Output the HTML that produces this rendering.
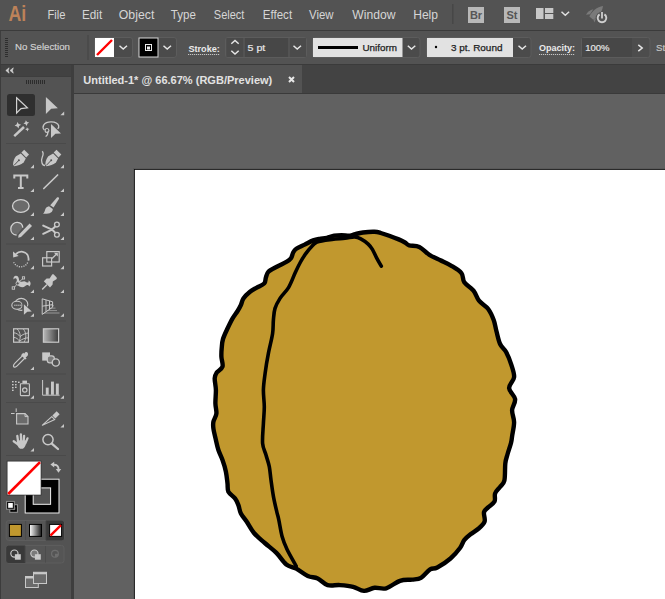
<!DOCTYPE html>
<html><head><meta charset="utf-8"><title>Illustrator</title>
<style>
html,body{margin:0;padding:0;width:665px;height:599px;overflow:hidden;background:#535353;font-family:"Liberation Sans", sans-serif;}
.a{position:absolute;}
svg text{font-family:"Liberation Sans", sans-serif;}
</style></head><body>
<!-- menu bar -->
<div class="a" style="left:0;top:0;width:665px;height:30px;background:#535353"></div>
<div class="a" style="left:0;top:30px;width:665px;height:1px;background:#3b3b3b"></div>
<!-- control bar -->
<div class="a" style="left:0;top:31px;width:665px;height:33px;background:#535353;border-left:1px solid #3e3e3e"></div>
<div class="a" style="left:0;top:64px;width:665px;height:1px;background:#3b3b3b"></div>
<!-- tools panel -->
<div class="a" style="left:0;top:65px;width:71px;height:534px;background:#535353"></div>
<div class="a" style="left:0;top:65px;width:71px;height:11px;background:#424242"></div>
<div class="a" style="left:0;top:76px;width:71px;height:1px;background:#3e3e3e"></div>
<div class="a" style="left:0;top:65px;width:1px;height:534px;background:#3c3c3c"></div>
<div class="a" style="left:71px;top:65px;width:3px;height:534px;background:#3e3e3e"></div>
<!-- tab bar -->
<div class="a" style="left:74px;top:65px;width:591px;height:28px;background:#434343"></div>
<div class="a" style="left:74px;top:65px;width:228px;height:28px;background:#535353"></div>
<div class="a" style="left:74px;top:93px;width:591px;height:1px;background:#3a3a3a"></div>
<!-- canvas -->
<div class="a" style="left:74px;top:94px;width:591px;height:505px;background:#616161"></div>
<div class="a" style="left:133px;top:168px;width:532px;height:431px;background:#595959"></div>
<div class="a" style="left:134px;top:169px;width:531px;height:430px;background:#2a2a2a"></div>
<div class="a" style="left:134px;top:169px;width:1px;height:1px;background:#111"></div>
<div class="a" style="left:135px;top:170px;width:530px;height:429px;background:#ffffff"></div>

<svg class="a" style="left:0;top:0" width="665" height="599" viewBox="0 0 665 599">
  <!-- walnut -->
  <path d="M362.9 232.5C366.1 232.1 371.5 231.7 374.5 231.8C377.5 231.9 378.4 232.3 380.8 233.0C383.2 233.7 386.2 234.6 389.2 235.7C392.2 236.8 396.1 238.3 398.7 239.4C401.3 240.5 403.2 241.5 405.0 242.5C406.8 243.5 406.8 244.7 409.2 245.4C411.6 246.1 415.9 245.3 419.3 246.9C422.7 248.5 425.9 252.6 429.4 254.8C432.9 257.0 436.7 258.5 440.4 260.3C444.1 262.1 447.9 263.7 451.4 265.8C454.9 267.9 459.4 270.4 461.5 273.2C463.6 275.9 462.3 279.4 464.3 282.3C466.3 285.2 471.1 287.5 473.5 290.6C475.9 293.7 476.6 297.6 479.0 300.7C481.4 303.8 485.8 305.8 488.2 309.0C490.6 312.2 492.3 316.3 493.7 320.0C495.1 323.7 495.3 327.0 496.4 331.0C497.5 335.0 498.5 340.5 500.1 344.0C501.7 347.5 504.3 348.6 506.1 352.0C507.9 355.4 509.8 359.9 511.1 364.1C512.4 368.3 514.4 373.1 514.1 377.1C513.8 381.1 508.9 384.4 509.1 388.1C509.3 391.8 514.6 395.4 515.1 399.1C515.6 402.8 512.3 406.4 512.1 410.2C511.9 414.0 514.1 417.9 514.1 422.2C514.1 426.5 512.6 432.7 512.1 436.2C511.6 439.7 511.8 440.0 511.0 443.0C510.2 446.0 508.6 450.6 507.6 454.0C506.7 457.4 505.8 459.0 505.3 463.4C504.8 467.8 505.3 476.6 504.4 480.5C503.5 484.4 501.6 484.9 500.0 487.0C498.4 489.1 496.0 491.0 495.1 493.4C494.2 495.8 495.7 499.3 494.5 501.6C493.3 503.9 489.9 505.6 488.1 507.4C486.4 509.1 484.6 509.8 484.0 512.1C483.4 514.5 485.5 518.8 484.6 521.5C483.7 524.2 481.1 526.4 478.7 528.5C476.3 530.6 472.9 532.4 470.5 534.3C468.1 536.2 466.1 537.7 464.4 539.9C462.7 542.1 462.5 544.6 460.2 547.7C457.9 550.8 454.3 555.2 450.5 558.5C446.7 561.8 440.7 565.7 437.3 567.5C433.9 569.3 432.8 567.6 430.1 569.3C427.4 571.0 424.0 576.1 421.0 577.8C418.0 579.5 415.5 579.1 412.0 579.6C408.5 580.1 404.3 579.3 400.0 580.8C395.7 582.2 390.4 587.1 386.2 588.3C382.0 589.5 378.3 587.4 374.6 587.8C370.9 588.2 367.5 591.1 363.9 590.9C360.3 590.7 357.1 587.8 353.1 586.8C349.1 585.8 344.1 585.4 339.9 585.1C335.6 584.8 331.3 586.2 327.6 585.1C323.9 584.0 321.0 580.0 317.7 578.5C314.4 577.0 311.4 577.6 307.8 576.0C304.2 574.4 299.8 570.5 296.2 568.6C292.6 566.7 289.6 567.1 286.3 564.5C283.0 561.9 280.0 556.5 276.4 552.9C272.8 549.3 268.5 546.3 264.8 543.0C261.1 539.7 257.0 536.6 254.0 533.0C251.0 529.4 248.8 524.8 246.6 521.5C244.4 518.2 242.3 516.2 240.9 513.5C239.5 510.8 239.4 507.6 238.4 505.1C237.4 502.6 236.7 500.6 235.0 498.4C233.3 496.2 229.7 494.3 228.4 491.8C227.2 489.3 227.9 486.8 227.5 483.4C227.1 480.0 226.7 475.6 225.9 471.7C225.1 467.8 223.8 463.6 222.5 460.0C221.2 456.4 219.5 453.3 218.4 450.0C217.3 446.7 216.7 443.6 215.9 440.0C215.1 436.4 213.8 431.5 213.4 428.5C213.0 425.5 212.9 424.3 213.4 421.8C213.9 419.3 216.1 416.6 216.4 413.5C216.7 410.4 215.5 407.3 215.4 403.4C215.3 399.5 216.0 394.2 215.9 390.0C215.8 385.8 214.6 381.3 214.7 378.4C214.8 375.5 215.4 374.6 216.7 372.6C218.0 370.7 221.7 369.4 222.5 366.7C223.3 364.0 221.5 359.8 221.4 356.7C221.3 353.6 221.4 351.2 221.7 348.3C222.0 345.4 222.0 342.3 223.0 339.0C224.0 335.7 225.9 331.9 227.5 328.5C229.1 325.1 230.9 321.3 232.6 318.4C234.3 315.5 236.2 313.2 237.6 311.0C239.0 308.8 239.9 307.1 240.9 305.0C241.9 302.9 241.9 300.6 243.4 298.4C244.9 296.2 247.8 293.5 250.0 291.7C252.2 289.9 254.4 289.0 256.8 287.6C259.2 286.2 262.8 285.1 264.3 283.4C265.8 281.7 265.2 279.4 265.9 277.5C266.6 275.6 266.6 273.5 268.4 271.7C270.2 269.9 273.7 268.4 276.8 266.7C279.9 265.0 284.4 263.1 286.8 261.7C289.2 260.3 289.9 259.8 291.0 258.3C292.1 256.8 292.3 254.1 293.2 252.5C294.1 250.9 294.4 250.1 296.3 248.8C298.2 247.5 301.9 246.0 304.7 244.6C307.5 243.2 310.7 241.4 313.2 240.4C315.7 239.4 317.2 239.2 319.5 238.8C321.8 238.4 324.4 238.3 326.8 237.8C329.2 237.3 331.7 236.1 334.2 235.7C336.7 235.3 339.0 235.2 341.6 235.2C344.2 235.2 347.7 235.9 350.0 235.7C352.3 235.5 353.2 234.6 355.3 234.1C357.4 233.6 359.7 232.9 362.9 232.5Z" fill="#c1982e" stroke="#000" stroke-width="4.4" stroke-linejoin="round"/>
  <path d="M381.3 266.2C380.5 264.8 378.1 260.6 376.6 257.8C375.1 255.0 373.8 251.7 372.4 249.4C371.0 247.1 370.1 245.9 368.2 244.1C366.3 242.3 363.1 240.0 360.8 238.8C358.5 237.6 357.1 237.1 354.5 237.0C351.9 236.9 348.8 237.9 345.0 238.3C341.2 238.7 336.7 238.8 332.0 239.4C327.3 240.0 320.5 240.7 317.0 242.0C313.5 243.3 312.9 245.4 311.0 247.3C309.1 249.2 307.6 251.2 305.8 253.6C304.1 256.1 302.2 258.9 300.5 262.0C298.8 265.1 297.3 268.2 295.3 272.5C293.3 276.8 291.1 283.3 288.5 287.6C285.9 291.9 282.2 294.9 280.0 298.4C277.8 301.9 276.1 304.8 275.0 308.4C273.9 312.0 273.8 315.8 273.4 320.0C273.0 324.2 273.4 327.9 272.6 333.5C271.8 339.1 269.6 346.8 268.4 353.4C267.1 360.0 265.9 367.3 265.1 373.4C264.3 379.5 263.5 384.4 263.4 390.0C263.3 395.6 264.3 401.2 264.3 406.8C264.3 412.4 263.7 417.4 263.4 423.5C263.1 429.6 262.2 438.1 262.6 443.4C263.0 448.6 264.9 451.1 266.0 455.0C267.1 458.9 268.5 462.5 269.3 466.7C270.1 470.9 270.3 475.0 271.0 480.0C271.7 485.0 272.5 491.5 273.5 496.8C274.5 502.1 275.9 508.0 276.8 511.8C277.7 515.6 277.9 515.7 278.8 519.8C279.7 523.9 280.7 531.4 282.1 536.4C283.5 541.4 284.8 544.6 287.1 549.6C289.5 554.6 294.7 563.4 296.2 566.1" fill="none" stroke="#000" stroke-width="3.6" stroke-linecap="round" stroke-linejoin="round"/>
  <!-- menu -->
  <text x="8.4" y="20.9" font-size="22" fill="#bd8259" font-weight="bold" textLength="17.8" lengthAdjust="spacingAndGlyphs">Ai</text>
  <text x="47.5" y="19" font-size="12" fill="#d6d6d6" font-weight="normal" text-anchor="start" textLength="18.1" lengthAdjust="spacingAndGlyphs">File</text><text x="82" y="19" font-size="12" fill="#d6d6d6" font-weight="normal" text-anchor="start" textLength="20.2" lengthAdjust="spacingAndGlyphs">Edit</text><text x="118.8" y="19" font-size="12" fill="#d6d6d6" font-weight="normal" text-anchor="start" textLength="35.5" lengthAdjust="spacingAndGlyphs">Object</text><text x="170.8" y="19" font-size="12" fill="#d6d6d6" font-weight="normal" text-anchor="start" textLength="25" lengthAdjust="spacingAndGlyphs">Type</text><text x="213.8" y="19" font-size="12" fill="#d6d6d6" font-weight="normal" text-anchor="start" textLength="30.6" lengthAdjust="spacingAndGlyphs">Select</text><text x="262.8" y="19" font-size="12" fill="#d6d6d6" font-weight="normal" text-anchor="start" textLength="29.3" lengthAdjust="spacingAndGlyphs">Effect</text><text x="309" y="19" font-size="12" fill="#d6d6d6" font-weight="normal" text-anchor="start" textLength="24.5" lengthAdjust="spacingAndGlyphs">View</text><text x="352.3" y="19" font-size="12" fill="#d6d6d6" font-weight="normal" text-anchor="start" textLength="43.2" lengthAdjust="spacingAndGlyphs">Window</text><text x="413.2" y="19" font-size="12" fill="#d6d6d6" font-weight="normal" text-anchor="start" textLength="24.8" lengthAdjust="spacingAndGlyphs">Help</text>

  <!-- menu right icons -->
  <rect x="452" y="4" width="1.5" height="20" fill="#474747"/>
  <rect x="468" y="7" width="16" height="16" fill="#b8b8b8"/>
  <text x="476" y="19" font-size="11" font-weight="bold" fill="#565656" text-anchor="middle">Br</text>
  <rect x="504" y="7" width="16" height="16" fill="#b8b8b8"/>
  <text x="512" y="19" font-size="11" font-weight="bold" fill="#565656" text-anchor="middle">St</text>
  <rect x="536" y="8" width="7.5" height="11" fill="#c8c8c8"/>
  <rect x="545" y="8" width="8.3" height="5" fill="#c8c8c8"/>
  <rect x="545" y="14" width="8.3" height="5" fill="#c8c8c8"/>
  <path d="M561.5 11.8L565.3 15.3L569.1 11.8" fill="none" stroke="#e0e0e0" stroke-width="1.5"/>
  <path d="M603 6C597.2 7 591.8 11 589.4 16.4L593.2 19.8C598.8 16.8 602.2 11.8 603 6Z" fill="#7a7a7a"/>
  <path d="M586 14.7C587.5 12 590 9.8 593.4 9.2L590 14.3Z" fill="#7a7a7a"/>
  <path d="M594.3 22.4L593.5 19.8L596.2 18.3Z" fill="#7a7a7a"/>
  <circle cx="602" cy="18" r="6.3" fill="#535353"/>
  <path d="M599.6 14.4A4.3 4.3 0 1 0 604.4 14.4" fill="none" stroke="#cfcfcf" stroke-width="1.9"/>
  <path d="M602 12V18.6" stroke="#cfcfcf" stroke-width="1.8"/>

  <!-- tab title -->
  <text x="83.3" y="84" font-size="11" fill="#e2e2e2" font-weight="bold" text-anchor="start" textLength="189" lengthAdjust="spacingAndGlyphs">Untitled-1* @ 66.67% (RGB/Preview)</text>
  <path d="M289 77L294 82M294 77L289 82" stroke="#e8e8e8" stroke-width="2"/>

  <!-- TOOLBAR -->
  <path d="M9.1 67.8L5.8 70.5L9.1 73.2L8.3 70.5ZM13.3 67.8L10 70.5L13.3 73.2L12.5 70.5Z" fill="#d0d0d0" stroke="#d0d0d0" stroke-width="0.6" stroke-linejoin="round"/>
  <g fill="#2c2c2c">
    <rect x="26" y="80" width="1" height="4"/><rect x="28" y="80" width="1" height="4"/><rect x="30" y="80" width="1" height="4"/>
    <rect x="32" y="80" width="1" height="4"/><rect x="34" y="80" width="1" height="4"/><rect x="36" y="80" width="1" height="4"/>
    <rect x="38" y="80" width="1" height="4"/><rect x="40" y="80" width="1" height="4"/><rect x="42" y="80" width="1" height="4"/>
    <rect x="44" y="80" width="1" height="4"/>
  </g>
  <g fill="#4a4a4a">
    <rect x="6" y="143" width="60" height="1"/>
    <rect x="6" y="243.5" width="60" height="1"/>
    <rect x="6" y="320.5" width="60" height="1"/>
    <rect x="6" y="373.5" width="60" height="1"/>
    <rect x="6" y="402" width="60" height="1"/>
    <rect x="6" y="455" width="60" height="1"/>
  </g>
  <rect x="7" y="94" width="28" height="22" rx="2.5" fill="#2f2f2f"/>
  <g fill="#c8c8c8">
    <!-- corner triangles -->
    <path d="M64.2 111.4V115.2H60.4Z"/>
    <path d="M34 164.6V168.2H30.4Z"/><path d="M64 164.6V168.2H60.4Z"/>
    <path d="M34 188.5V192H30.4Z"/><path d="M64 188.5V192H60.4Z"/>
    <path d="M34 212.3V215.9H30.4Z"/><path d="M64 212.3V215.9H60.4Z"/>
    <path d="M34 236.5V240.1H30.4Z"/><path d="M64 236.5V240.1H60.4Z"/>
    <path d="M34 265.6V269.2H30.4Z"/><path d="M64 265.6V269.2H60.4Z"/>
    <path d="M34 289.4V293H30.4Z"/><path d="M64 289.4V293H60.4Z"/>
    <path d="M34 313.2V316.8H30.4Z"/><path d="M64 313.2V316.8H60.4Z"/>
    <path d="M34 366.4V370H30.4Z"/>
    <path d="M34 395.2V398.8H30.4Z"/><path d="M64 395.2V398.8H60.4Z"/>
    <path d="M64 424V427.6H60.4Z"/>
    <path d="M34 448V451.6H30.4Z"/>
    <!-- direct selection -->
    <path d="M45.9 96.9L57.9 108.3L51.2 108.8L45.9 113.9Z"/>
  </g>
  <!-- selection -->
  <path d="M16.6 97.8L27.4 107.9L21 108.6L16.6 113Z" fill="none" stroke="#d2d2d2" stroke-width="1.2" stroke-linejoin="miter"/>
  <!-- magic wand -->
  <path d="M14.2 136.2L24 127" stroke="#c8c8c8" stroke-width="2.5"/>
  <path d="M17.33 121.95L18.73 124.01L21.15 124.63L19.09 126.03L18.47 128.45L17.07 126.39L14.65 125.77L16.71 124.37Z" fill="#c8c8c8"/>
  <path d="M25.80 120.24L27.05 122.04L29.16 122.60L27.36 123.85L26.80 125.96L25.55 124.16L23.44 123.60L25.24 122.35Z" fill="#c8c8c8"/>
  <path d="M26.92 127.13L27.87 128.48L29.47 128.92L28.12 129.87L27.68 131.47L26.73 130.12L25.13 129.68L26.48 128.73Z" fill="#c8c8c8"/>
  <!-- lasso -->
  <path d="M44.4 130C43 128.6 42.8 126.4 43.8 124.8C45.4 122.6 48.4 121.8 51.4 121.9C55 122 58 123.6 58.7 125.8C59 127 58.6 128 57.6 128.8" fill="none" stroke="#c8c8c8" stroke-width="1.3"/>
  <circle cx="47" cy="130.4" r="1.9" fill="none" stroke="#c8c8c8" stroke-width="1.2"/>
  <path d="M47.6 132.2C48 133.6 47.4 135.2 46 136.2" fill="none" stroke="#c8c8c8" stroke-width="1.3" stroke-linecap="round"/>
  <path d="M51 124.1L61 133.4L55.4 133.8L51 137.9Z" fill="#c8c8c8"/>
  <!-- pen -->
  <g transform="translate(0 0)">
    <path d="M21.4 152.6L24.2 149.8L29 154.6L26.2 157.4Z" fill="#c8c8c8"/>
    <path d="M13 164.4C13.2 161.2 14.2 158.2 16 156.2L20.8 153.6L25.8 158.6L23.6 162.4C21 164.4 17.6 165.8 14 166.2Z" fill="#c8c8c8"/>
    <path d="M14 165.4L18.6 160.6" stroke="#535353" stroke-width="1"/>
    <circle cx="18.9" cy="160.3" r="1" fill="#535353"/>
  </g>
  <g transform="translate(32.3 0)">
    <path d="M21.4 152.6L24.2 149.8L29 154.6L26.2 157.4Z" fill="#c8c8c8"/>
    <path d="M13 164.4C13.2 161.2 14.2 158.2 16 156.2L20.8 153.6L25.8 158.6L23.6 162.4C21 164.4 17.6 165.8 14 166.2Z" fill="#c8c8c8"/>
    <path d="M14 165.4L18.6 160.6" stroke="#535353" stroke-width="1"/>
    <circle cx="18.9" cy="160.3" r="1" fill="#535353"/>
  </g>
  <path d="M42.2 151.3C43.8 153 43.2 155 42.3 157C41.4 159 41.3 161 42 163C42.4 164.5 43.6 165.5 45 165.5" fill="none" stroke="#c8c8c8" stroke-width="1.3"/>
  <!-- type -->
  <path d="M14.3 178.6V175.6H27.3V178.6M20.8 175.6V188M18 188H23.6" fill="none" stroke="#c8c8c8" stroke-width="2"/>
  <!-- line -->
  <path d="M43.8 188.5L57.6 175" stroke="#c8c8c8" stroke-width="1.7" stroke-linecap="round"/>
  <!-- ellipse -->
  <ellipse cx="20.8" cy="206" rx="8.3" ry="6.4" fill="#6b6b6b" stroke="#d0d0d0" stroke-width="1.3"/>
  <!-- brush -->
  <path d="M57 197.6C58 196.8 59.4 197.6 59 198.8L53.6 207.6L50.2 205.2Z" fill="#c8c8c8"/>
  <path d="M49 206.2L52.8 209C52.8 212.4 49.6 214.2 43 213.8C44.6 212.4 44.8 211 45.2 209.6C45.8 207.6 47.2 206.6 49 206.2Z" fill="#c8c8c8"/>
  <!-- shaper -->
  <path d="M16.6 235.2C12.6 234.6 10.6 231.6 10.8 228.4C11.2 224.6 14.2 222.2 17.4 222.4C20.4 222.6 22.6 224.8 22.8 227.6" fill="#6b6b6b" stroke="#d0d0d0" stroke-width="1.3"/>
  <path d="M29.6 223.6L32 226L21 237L18.2 237.8L18.6 235Z" fill="#c8c8c8"/>
  <!-- scissors -->
  <path d="M43.2 225.6L52 229.6L55 232.4M43.2 233.8L52 229.6L55 226.8" fill="none" stroke="#c8c8c8" stroke-width="2" stroke-linecap="round" stroke-linejoin="round"/>
  <circle cx="56.9" cy="224.6" r="2.4" fill="none" stroke="#c8c8c8" stroke-width="1.3"/>
  <circle cx="56.9" cy="234.8" r="2.4" fill="none" stroke="#c8c8c8" stroke-width="1.3"/>
  <!-- rotate -->
  <path d="M16 254C17.8 252.2 20.4 251.4 22.8 251.8C26.4 252.4 28.6 255.6 28.6 259C28.6 259.6 28.5 260.1 28.4 260.6" fill="none" stroke="#c8c8c8" stroke-width="1.8"/>
  <path d="M13 251.6L13.2 257.4L18.6 256Z" fill="#c8c8c8"/>
  <path d="M27.6 262.6C26.4 265.2 23.8 266.8 20.8 266.8C17.6 266.8 14.8 264.8 13.6 262" fill="none" stroke="#c8c8c8" stroke-width="1.3" stroke-dasharray="1.1 1.2"/>
  <!-- scale -->
  <rect x="46.8" y="251.6" width="12.4" height="10.4" fill="none" stroke="#c8c8c8" stroke-width="1.2"/>
  <rect x="42.6" y="257.8" width="9" height="8.2" fill="none" stroke="#c8c8c8" stroke-width="1.2"/>
  <path d="M52 258.5L56.6 254" stroke="#c8c8c8" stroke-width="1.3"/>
  <path d="M57.8 252.7V256.6L53.9 252.7Z" fill="#c8c8c8"/>
  <!-- puppet warp -->
  <path d="M13.6 279.4C13 277.6 14.2 275.8 16 275.8C17.6 275.8 18.6 277 18.8 278.6C19 280.4 19.6 281.6 21 281.8C22.4 282 23.6 281 24.8 281.4C26.2 281.8 27 282.6 28 282.4C28.8 282.2 28.8 281 28.2 280.4C29.8 280.6 30.8 282.2 30.6 283.8C30.4 285.4 29.8 286.2 29.2 286.4C28.8 285.2 28 284.6 27 285C25.6 285.6 24.6 287.2 22.4 287.2C20.4 287.2 18.6 286 17.4 285C16.4 284.2 16 282.8 16.6 281.6C17 280.6 17 279.4 16.2 278.6C15.4 277.9 14.4 278.4 13.6 279.4Z" fill="#c8c8c8"/>
  <path d="M14.2 287.6L17.6 283.4L23.5 278" stroke="#c8c8c8" stroke-width="0.9"/>
  <circle cx="17.6" cy="283.4" r="1.6" fill="#535353" stroke="#c8c8c8" stroke-width="0.9"/>
  <rect x="12.2" y="286.8" width="2.4" height="2.4" fill="#535353" stroke="#c8c8c8" stroke-width="0.9"/>
  <rect x="22.4" y="276.8" width="2.2" height="2.2" fill="#535353" stroke="#c8c8c8" stroke-width="0.9"/>
  <!-- pin -->
  <path d="M43.8 281.2L46.6 278.6L49.6 278.4L52 274.8C52.6 274.2 53.4 274.2 54 274.8L56.4 277.2C57 277.8 57 278.6 56.4 279.2L52.8 281.6L52.6 284.6L50 287.4Z" fill="#c8c8c8"/>
  <path d="M46.6 285L42.6 289" stroke="#c8c8c8" stroke-width="1.5" stroke-linecap="round"/>
  <!-- shape builder -->
  <ellipse cx="21.2" cy="304.4" rx="6.6" ry="6" fill="none" stroke="#c8c8c8" stroke-width="1.1"/>
  <ellipse cx="17" cy="305.2" rx="5.2" ry="4" fill="#535353" stroke="#c8c8c8" stroke-width="1.1"/>
  <g fill="#c8c8c8"><rect x="14.4" y="304.6" width="1" height="1.4"/><rect x="16.4" y="304.6" width="1" height="1.4"/><rect x="18.4" y="304.6" width="1" height="1.4"/><rect x="20.4" y="304.6" width="1" height="1.4"/><rect x="22.6" y="304.6" width="1" height="1.4"/></g>
  <path d="M23.2 303.6L32 311.6L27.2 312L23.2 315.6Z" fill="#535353" stroke="#535353" stroke-width="1.6"/>
  <path d="M23.9 304.3L31.8 311.4L27.3 311.8L23.9 314.8Z" fill="#c8c8c8"/>
  <!-- perspective grid -->
  <g fill="#8e8e8e"><rect x="51.5" y="305.2" width="2.5" height="1"/><rect x="49.5" y="307.6" width="6" height="1.1"/><rect x="47" y="310" width="10" height="1.1"/><rect x="44" y="312.4" width="15.5" height="1.2"/></g>
  <path d="M42.2 298.8L52.6 301.8V307.2L42.2 314.4ZM42.2 306.2L52.6 304.6M46 300V311.8M49.5 301V309.2" fill="none" stroke="#c8c8c8" stroke-width="1" stroke-linejoin="round"/>
  <!-- mesh -->
  <rect x="13.6" y="328.8" width="14.8" height="13.4" fill="none" stroke="#c8c8c8" stroke-width="1.2"/>
  <path d="M17.2 329C20.6 332.5 21 337.5 19 342M23.4 329C26.4 333 26.6 337.5 24.2 342M13.8 332.8C16.4 333 18.4 334.4 20.2 336.6M13.8 337.4C16.2 337.6 18.2 339 19.6 341.2M20.2 336.6C22.6 334.4 25.2 333.4 28.2 333M19.6 341.2C22.2 339 25 338 28.2 337.8" fill="none" stroke="#c8c8c8" stroke-width="0.9"/>
  <!-- gradient -->
  <defs><linearGradient id="gt" x1="0" x2="1" y1="0" y2="0"><stop offset="0" stop-color="#b9b9b9"/><stop offset="1" stop-color="#3c3c3c"/></linearGradient>
  <linearGradient id="gs" x1="0" x2="1" y1="0" y2="0"><stop offset="0" stop-color="#ffffff"/><stop offset="1" stop-color="#1a1a1a"/></linearGradient></defs>
  <rect x="43.4" y="328.8" width="15.2" height="13.4" fill="url(#gt)" stroke="#c8c8c8" stroke-width="1.2"/>
  <!-- eyedropper -->
  <path d="M22.6 355.6L15 363.2C13.6 364.6 13 366 13.8 366.8C14.6 367.6 16 367 17.4 365.6L25 358" fill="none" stroke="#c8c8c8" stroke-width="1.2"/>
  <path d="M21 355.2L25.4 359.6L26.6 358.4L25.6 357.4C27.6 356.6 28.6 354.6 27.8 353C27 351.6 25 351.8 24.2 353.8L23.2 352.8Z" fill="#c8c8c8"/>
  <!-- blend -->
  <rect x="42.2" y="352.4" width="7.8" height="8.2" fill="#c8c8c8"/>
  <rect x="47.3" y="355.8" width="7" height="7" rx="2.4" fill="#7a7a7a" stroke="#c8c8c8" stroke-width="1.2"/>
  <circle cx="55.8" cy="362.5" r="3.6" fill="#535353" stroke="#c8c8c8" stroke-width="1.4"/>
  <!-- symbol sprayer -->
  <g fill="#c8c8c8">
    <rect x="12" y="381" width="1.6" height="1.4"/><rect x="15" y="381" width="1.6" height="1.4"/><rect x="18" y="381.6" width="1.6" height="1.4"/>
    <rect x="12" y="384" width="1.6" height="1.4"/><rect x="15" y="384" width="1.6" height="1.4"/>
    <rect x="12" y="387" width="1.6" height="1.4"/><rect x="15" y="386.6" width="1.6" height="1.4"/>
    <rect x="12" y="389.6" width="1.6" height="1.4"/>
    <rect x="22.4" y="380.6" width="4.6" height="2.8"/>
  </g>
  <rect x="20.4" y="383.8" width="9" height="11.8" rx="0.6" fill="none" stroke="#c8c8c8" stroke-width="1.1"/>
  <circle cx="24.8" cy="390" r="2.2" fill="none" stroke="#c8c8c8" stroke-width="1.2"/>
  <!-- column graph -->
  <path d="M42.6 380V395.2H59.6" fill="none" stroke="#c8c8c8" stroke-width="1"/>
  <g fill="#c8c8c8"><rect x="45.8" y="387.6" width="2.9" height="7.2"/><rect x="51" y="381.6" width="2.9" height="13.2"/><rect x="55.9" y="383.6" width="2.9" height="11.2"/></g>
  <!-- artboard -->
  <path d="M16.6 413.6H25L28 416.6V424H16.6Z" fill="#6b6b6b" stroke="#c8c8c8" stroke-width="1.1"/>
  <path d="M11 413.5H14.6M16.2 408.4V412" stroke="#c8c8c8" stroke-width="1"/>
  <path d="M25 413.6V416.6H28" fill="none" stroke="#c8c8c8" stroke-width="1"/>
  <!-- slice -->
  <path d="M42.4 425.2L51.8 416.6L54.8 419.6Z" fill="none" stroke="#c8c8c8" stroke-width="1.1" stroke-linejoin="round"/>
  <path d="M52.4 415.4L56.6 411.2L59.6 414.2L55.4 418.4Z" fill="#c8c8c8"/>
  <!-- hand -->
  <path d="M17.3 435.8L18.1 442M20.9 434.4L21.1 441M24.1 435.8L23.6 442M27.5 438.4L25.2 443.6M13.7 441.3L18.2 444.6" stroke="#c8c8c8" stroke-width="2.3" stroke-linecap="round"/>
  <path d="M17 440.2L25.8 440.6L25.4 445.4C24.6 447.8 23.4 448.8 21.4 448.8C19.6 448.8 18.4 447.6 17.6 445.4Z" fill="#c8c8c8"/>
  <!-- zoom -->
  <circle cx="48" cy="439.6" r="5.1" fill="none" stroke="#c8c8c8" stroke-width="1.5"/>
  <path d="M51.8 443.6L58 449" stroke="#c8c8c8" stroke-width="2.3" stroke-linecap="round"/>
  <!-- fill / stroke swatches -->
  <rect x="25.2" y="479.2" width="33.8" height="33.8" fill="#000" stroke="#ececec" stroke-width="1"/>
  <rect x="33.2" y="487.9" width="17.4" height="16.4" fill="#535353" stroke="#f0f0f0" stroke-width="1"/>
  <rect x="6.7" y="460.7" width="34.7" height="34.7" fill="#2e2e2e"/>
  <rect x="7.5" y="461.5" width="33.2" height="33.2" fill="#fff"/>
  <path d="M8.2 494L40 462.2" stroke="#f00" stroke-width="2.6"/>
  <!-- swap -->
  <path d="M53.6 464.8C57 464.6 58.6 466.4 58.6 469.6" fill="none" stroke="#c8c8c8" stroke-width="1.9"/>
  <path d="M50.4 464.6L54.2 461.8V467.4Z M55.8 469H61.2L58.5 472.8Z" fill="#c8c8c8"/>
  <!-- default -->
  <rect x="9.8" y="504.7" width="7.6" height="7.6" fill="#000" stroke="#9a9a9a" stroke-width="1"/>
  <path d="M12.6 509.6H14.8V507.2" fill="none" stroke="#9a9a9a" stroke-width="0.9"/>
  <rect x="6.5" y="501.4" width="7.9" height="7.9" fill="#111" stroke="#8a8a8a" stroke-width="1"/>
  <rect x="8.2" y="503" width="4.6" height="4.8" fill="#fff"/>
  <!-- color mode group -->
  <rect x="6.2" y="520.6" width="57.8" height="19.8" rx="2.5" fill="#555" stroke="#5e5e5e" stroke-width="1"/>
  <path d="M45.8 520.6H61.5A2.5 2.5 0 0 1 64 523.1V537.9A2.5 2.5 0 0 1 61.5 540.4H45.8Z" fill="#393939"/>
  <path d="M25.6 521V540M45.8 521V540" stroke="#4c4c4c" stroke-width="1"/>
  <rect x="9.4" y="524.4" width="12" height="12" fill="#c1982e" stroke="#000" stroke-width="1"/>
  <rect x="29.5" y="524.4" width="12" height="12" fill="url(#gs)" stroke="#000" stroke-width="1"/>
  <rect x="49.6" y="524.4" width="12" height="12" fill="#fff" stroke="#000" stroke-width="1"/>
  <path d="M50.4 535.6L61 525.2" stroke="#f00" stroke-width="2.4"/>
  <!-- draw mode group -->
  <rect x="6.2" y="545.4" width="57.8" height="17.6" rx="2.5" fill="#555" stroke="#5e5e5e" stroke-width="1"/>
  <path d="M25.2 545.4H8.7A2.5 2.5 0 0 0 6.2 547.9V560.5A2.5 2.5 0 0 0 8.7 563H25.2Z" fill="#393939"/>
  <path d="M25.2 546V562.6M45.5 546V562.6" stroke="#4c4c4c" stroke-width="1"/>
  <circle cx="14.4" cy="553.6" r="3.6" fill="none" stroke="#c8c8c8" stroke-width="1.2"/>
  <rect x="14.9" y="554.2" width="5.9" height="5.5" fill="#c8c8c8"/>
  <circle cx="34.4" cy="553.6" r="3.6" fill="#7a7a7a" stroke="#c8c8c8" stroke-width="1.2"/>
  <rect x="34.9" y="554.2" width="5.9" height="5.5" fill="#c8c8c8"/>
  <circle cx="55" cy="553.8" r="3.4" fill="none" stroke="#6e6e6e" stroke-width="1.2"/>
  <path d="M55 553.8H58.4A3.4 3.4 0 0 1 55 557.2Z" fill="#6e6e6e"/>
  <!-- screen mode -->
  <rect x="25.5" y="576.5" width="12.8" height="11" fill="#6b6b6b" stroke="#c8c8c8" stroke-width="1"/>
  <rect x="25.5" y="576.5" width="12.8" height="2" fill="#c8c8c8"/>
  <rect x="33.5" y="572.3" width="13" height="11.2" fill="#6b6b6b" stroke="#c8c8c8" stroke-width="1"/>
  <rect x="33.5" y="572.3" width="13" height="2" fill="#c8c8c8"/>

  <!-- control bar widgets -->
  <g fill="#2e2e2e">
    <rect x="5" y="38" width="3" height="1"/><rect x="5" y="40" width="3" height="1"/><rect x="5" y="42" width="3" height="1"/>
    <rect x="5" y="44" width="3" height="1"/><rect x="5" y="46" width="3" height="1"/><rect x="5" y="48" width="3" height="1"/>
    <rect x="5" y="50" width="3" height="1"/><rect x="5" y="52" width="3" height="1"/><rect x="5" y="54" width="3" height="1"/>
    <rect x="5" y="56" width="3" height="1"/>
  </g>
  <rect x="87.5" y="35" width="1" height="25" fill="#444"/>
  <!-- fill group -->
  <rect x="94.5" y="37.5" width="38" height="20" rx="2.5" fill="#4b4b4b" stroke="#5c5c5c" stroke-width="1"/>
  <rect x="95" y="38" width="19" height="19" fill="#fff"/>
  <path d="M97 55L112 40" stroke="#f00" stroke-width="2.4"/>
  <path d="M119.5 45.7L123.2 49L127 45.7" fill="none" stroke="#e6e6e6" stroke-width="1.5"/>
  <!-- stroke group -->
  <rect x="138.5" y="37.5" width="38" height="20" rx="2.5" fill="#4b4b4b" stroke="#5c5c5c" stroke-width="1"/>
  <rect x="139" y="38" width="19" height="19" fill="#000" stroke="#d4d4d4" stroke-width="1"/>
  <rect x="145.5" y="44.5" width="6" height="6" fill="none" stroke="#eee" stroke-width="1"/>
  <rect x="147" y="46.5" width="3" height="3" fill="#eee"/>
  <path d="M163.5 45.7L167.2 49L171 45.7" fill="none" stroke="#e6e6e6" stroke-width="1.5"/>
  <!-- stroke label -->
  <path d="M188 54.5H220" stroke="#c4c4c4" stroke-width="1" stroke-dasharray="1.2 0.8"/>
  <!-- stroke weight -->
  <rect x="225.5" y="37.5" width="81" height="20" rx="2.5" fill="#535353" stroke="#5c5c5c" stroke-width="1"/>
  <rect x="226.5" y="38" width="16.5" height="19" fill="#4a4a4a"/>
  <rect x="245" y="38" width="43" height="19" fill="#474747"/>
  <rect x="290" y="38" width="16" height="19" fill="#4b4b4b"/>
  <path d="M231.3 43.7L235 40.5L238.7 43.7M231.3 50.7L235 54L238.7 50.7" fill="none" stroke="#e6e6e6" stroke-width="1.5"/>
  <path d="M293.5 45.7L297.2 49L301 45.7" fill="none" stroke="#e6e6e6" stroke-width="1.5"/>
  <!-- profile -->
  <rect x="312.5" y="37.5" width="107.5" height="20" rx="2.5" fill="#4b4b4b" stroke="#5c5c5c" stroke-width="1"/>
  <rect x="313" y="38" width="89.5" height="19" fill="#e2e2e2"/>
  <rect x="318" y="46" width="40" height="3" fill="#000"/>
  <path d="M407.8 45.7L411.5 49L415.3 45.7" fill="none" stroke="#e6e6e6" stroke-width="1.5"/>
  <!-- brush -->
  <rect x="426.5" y="37.5" width="104.5" height="20" rx="2.5" fill="#4b4b4b" stroke="#5c5c5c" stroke-width="1"/>
  <rect x="427" y="38" width="86" height="19" fill="#e2e2e2"/>
  <circle cx="436" cy="47" r="1.2" fill="#000"/>
  <path d="M518.5 45.7L522.2 49L526 45.7" fill="none" stroke="#e6e6e6" stroke-width="1.5"/>
  <!-- opacity -->
  <path d="M539 54.5H575" stroke="#c4c4c4" stroke-width="1" stroke-dasharray="1.2 0.8"/>
  <rect x="581.5" y="37.5" width="68.5" height="20" rx="2.5" fill="#4d4d4d" stroke="#5c5c5c" stroke-width="1"/>
  <rect x="582" y="38" width="50" height="19" fill="#474747"/>
  <path d="M638.3 44.8L642.2 48L638.3 51.2" fill="none" stroke="#e6e6e6" stroke-width="1.5"/>

  <!-- control bar text -->
  <text x="15" y="50" font-size="9.6" fill="#d2d2d2" font-weight="normal" text-anchor="start" textLength="55" lengthAdjust="spacingAndGlyphs" stroke="#d2d2d2" stroke-width="0.15">No Selection</text>
  <text x="188.4" y="51.6" font-size="9.3" fill="#eaeaea" font-weight="bold" text-anchor="start" textLength="31.5" lengthAdjust="spacingAndGlyphs">Stroke:</text>
  <text x="247.5" y="51.2" font-size="9.8" fill="#e6e6e6" font-weight="normal" text-anchor="start" textLength="17.8" lengthAdjust="spacingAndGlyphs" stroke="#e6e6e6" stroke-width="0.2">5 pt</text>
  <text x="362.4" y="51.3" font-size="9.4" fill="#1e1e1e" font-weight="normal" text-anchor="start" textLength="34.6" lengthAdjust="spacingAndGlyphs" stroke="#1e1e1e" stroke-width="0.25">Uniform</text>
  <text x="451" y="51.3" font-size="9.4" fill="#1e1e1e" font-weight="normal" text-anchor="start" textLength="51.5" lengthAdjust="spacingAndGlyphs" stroke="#1e1e1e" stroke-width="0.25">3 pt. Round</text>
  <text x="539.1" y="51.4" font-size="9.3" fill="#eaeaea" font-weight="bold" text-anchor="start" textLength="36" lengthAdjust="spacingAndGlyphs">Opacity:</text>
  <text x="585.2" y="51.3" font-size="9.8" fill="#e6e6e6" font-weight="normal" text-anchor="start" textLength="24.4" lengthAdjust="spacingAndGlyphs" stroke="#e6e6e6" stroke-width="0.2">100%</text>
  <text x="656" y="51.3" font-size="9.6" fill="#c4c4c4" font-weight="normal" text-anchor="start" stroke="#c4c4c4" stroke-width="0.2">St</text>
</svg>
</body></html>
